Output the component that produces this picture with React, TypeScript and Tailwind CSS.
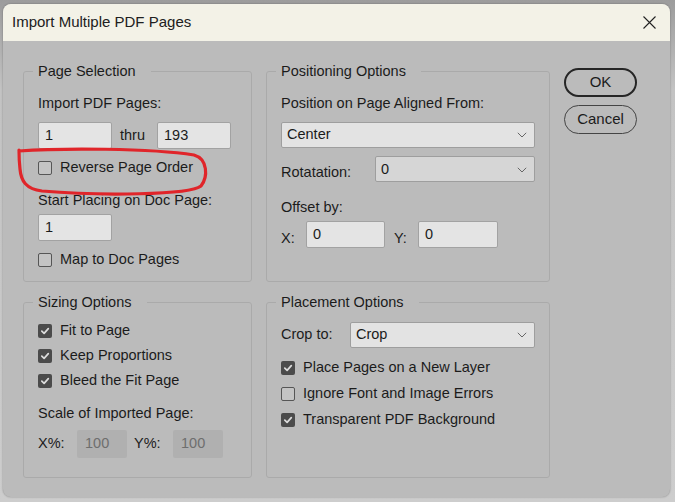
import React from "react";

const font = { fontFamily: '"Liberation Sans", Arial, sans-serif' };

// Small building blocks of the dialog
const Box = ({ checked }: { checked?: boolean }) =>
  checked ? (
    <span className="flex h-[14px] w-[14px] shrink-0 items-center justify-center rounded-[2px] bg-[#4b4b4b]">
      <svg width="10" height="10" viewBox="0 0 10 10">
        <path d="M1.8 5.2 L4.1 7.4 L8.3 2.6" fill="none" stroke="#dcdcdc" strokeWidth="1.7" strokeLinecap="round" strokeLinejoin="round" />
      </svg>
    </span>
  ) : (
    <span className="h-[14px] w-[14px] shrink-0 rounded-[2px] border border-[#565656] bg-[#c4c4c4]" />
  );

const CheckRow = ({ label, checked, className = "" }: { label: string; checked?: boolean; className?: string }) => (
  <div className={`flex h-[20px] items-center gap-[8px] ${className}`}>
    <Box checked={checked} />
    <span>{label}</span>
  </div>
);

const Field = ({ value, className = "" }: { value: string; className?: string }) => (
  <div className={`flex h-[27px] items-center rounded-[2px] border border-[#a2a2a2] bg-[#e4e4e4] pl-[6px] ${className}`}>{value}</div>
);

const Chevron = () => (
  <svg width="10" height="6" viewBox="0 0 10 6">
    <polyline points="0.8,0.8 5,5 9.2,0.8" fill="none" stroke="#666" strokeWidth="1" />
  </svg>
);

const Select = ({ value, className = "" }: { value: string; className?: string }) => (
  <div className={`flex h-[26px] items-center justify-between rounded-[2px] border border-[#9e9e9e] pl-[5px] pr-[7px] ${className}`}>
    <span>{value}</span>
    <Chevron />
  </div>
);

const Group = ({ title, className = "", children }: { title: string; className?: string; children: React.ReactNode }) => (
  <fieldset className={`rounded-[3px] border border-[#aaaaaa] ${className}`}>
    <legend className="ml-[9px] pl-[5px] pr-[15px] leading-[20px]">{title}</legend>
    <div className="flex flex-col px-[14px]">{children}</div>
  </fieldset>
);

export default function App() {
  return (
    <div
      className="relative h-[502px] w-[675px] overflow-hidden bg-[linear-gradient(#9c9c9c_0px,#c3c3c3_90px,#cdcdcd_100%)] pl-[3px] pt-[4px] text-[14.5px] text-[#1b1b1b]"
      style={font}
    >
      <div className="flex h-[493px] w-[667px] flex-col overflow-hidden rounded-[8px] bg-[#bbbbbb] shadow-[0_0_2px_rgba(0,0,0,0.35)]">
        {/* Title bar */}
        <div className="flex h-[37px] shrink-0 items-center justify-between bg-[#f3f2e7] pl-[9px] pr-[14px]">
          <span className="text-[15px] text-[#202020]">Import Multiple PDF Pages</span>
          <svg width="13" height="13" viewBox="0 0 13 13">
            <path d="M0.5 0.5 L12.5 12.5 M12.5 0.5 L0.5 12.5" stroke="#222" strokeWidth="1.1" />
          </svg>
        </div>

        {/* Body */}
        <div className="flex gap-[14px] pl-[20px] pt-[20px]">
          <div className="grid grid-cols-[229px_284px] gap-x-[14px] gap-y-[10px]">
            <Group title="Page Selection" className="h-[221px]">
              <div className="mt-[12px] leading-[20px]">Import PDF Pages:</div>
              <div className="mt-[9px] flex items-center">
                <Field value="1" className="w-[74px]" />
                <span className="ml-[8px] w-[37px]">thru</span>
                <Field value="193" className="w-[74px]" />
              </div>
              <CheckRow label="Reverse Page Order" className="mt-[9px]" />
              <div className="mt-[12px] leading-[20px]">Start Placing on Doc Page:</div>
              <Field value="1" className="mt-[4px] w-[74px]" />
              <CheckRow label="Map to Doc Pages" className="mt-[9px]" />
            </Group>

            <Group title="Positioning Options" className="h-[221px]">
              <div className="mt-[12px] leading-[20px]">Position on Page Aligned From:</div>
              <Select value="Center" className="mt-[9px] bg-[#e3e3e3]" />
              <div className="mt-[8px] flex items-end">
                <span className="w-[94px] leading-[20px]">Rotatation:</span>
                <Select value="0" className="h-[25px] flex-1 items-start bg-[#d6d6d6] pt-[2px] [&>svg]:mt-[8px]" />
              </div>
              <div className="mt-[15px] leading-[20px]">Offset by:</div>
              <div className="mt-[4px] flex items-end">
                <span className="w-[25px] leading-[20px]">X:</span>
                <Field value="0" className="w-[79px]" />
                <span className="ml-[9px] w-[24px] leading-[20px]">Y:</span>
                <Field value="0" className="w-[80px]" />
              </div>
            </Group>

            <Group title="Sizing Options" className="h-[186px]">
              <div className="mt-[9px] flex flex-col gap-[5px]">
                <CheckRow label="Fit to Page" checked />
                <CheckRow label="Keep Proportions" checked />
                <CheckRow label="Bleed the Fit Page" checked />
              </div>
              <div className="mt-[12px] leading-[20px]">Scale of Imported Page:</div>
              <div className="mt-[7px] flex items-center">
                <span className="w-[39px]">X%:</span>
                <div className="flex h-[28px] w-[50px] items-center rounded-[2px] bg-[#b0b0b0] pl-[8px] text-[#6e6e6e]">100</div>
                <span className="ml-[7px] w-[39px]">Y%:</span>
                <div className="flex h-[28px] w-[50px] items-center rounded-[2px] bg-[#b0b0b0] pl-[8px] text-[#6e6e6e]">100</div>
              </div>
            </Group>

            <Group title="Placement Options" className="h-[186px]">
              <div className="mt-[10px] flex items-center">
                <span className="w-[69px]">Crop to:</span>
                <Select value="Crop" className="flex-1 bg-[#e3e3e3]" />
              </div>
              <div className="mt-[10px] flex flex-col gap-[6px]">
                <CheckRow label="Place Pages on a New Layer" checked />
                <CheckRow label="Ignore Font and Image Errors" />
                <CheckRow label="Transparent PDF Background" checked />
              </div>
            </Group>
          </div>

          {/* Buttons */}
          <div className="flex flex-col gap-[8px] pt-[7px]">
            <button className="h-[29px] w-[73px] rounded-full border-[2.5px] border-[#262626] text-[15px]">OK</button>
            <button className="h-[29px] w-[73px] rounded-full border border-[#444444] text-[15px]">Cancel</button>
          </div>
        </div>
      </div>

      {/* Red hand-drawn annotation around "Reverse Page Order" */}
      <svg className="pointer-events-none absolute left-0 top-0" width="675" height="502">
        <path
          d="M19 151 C 60 148, 150 148, 194 155 C 208 159, 208 177, 201 186 C 190 195, 100 196, 42 191 C 26 189, 21 181, 20 169 C 19 160, 19 155, 19 150"
          fill="none"
          stroke="#e0252a"
          strokeWidth="3.2"
          strokeLinecap="round"
        />
      </svg>
    </div>
  );
}
